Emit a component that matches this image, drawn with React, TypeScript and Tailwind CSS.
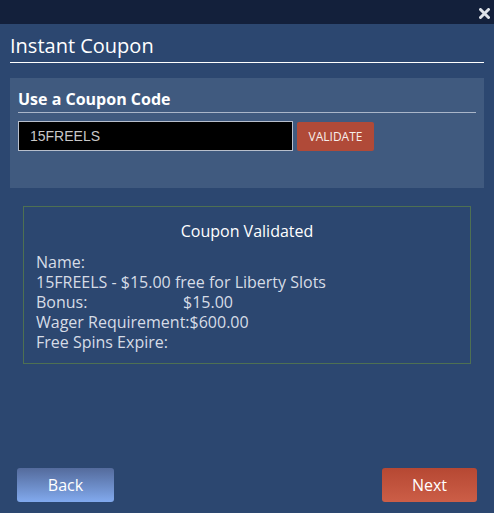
export default function App() {
  return (
    <div className="w-full h-[513px] bg-[#2c4770] flex flex-col font-['Open_Sans',sans-serif] text-white">
      {/* top bar */}
      <div className="h-[24px] bg-[#13203b] flex items-start justify-end pr-[4px] pt-[8px] shrink-0">
        <svg width="11" height="11" viewBox="0 0 11 11">
          <path d="M1.5 1.5 L9.5 9.5 M9.5 1.5 L1.5 9.5" stroke="#dde1e8" strokeWidth="3" strokeLinecap="round" />
        </svg>
      </div>

      <h1 className="mt-[8px] px-[10px] text-[20px] leading-[27px] font-normal">Instant Coupon</h1>
      <div className="mx-[10px] mt-[3px] h-px bg-white" />

      {/* coupon code section */}
      <div className="mx-[10px] mt-[15px] bg-[#405a7f] px-[8px] pt-[10px] pb-[37px]">
        <h2 className="text-[16px] leading-[22px] font-bold">Use a Coupon Code</h2>
        <div className="mt-[2px] h-px bg-[#aab6c9]" />
        <div className="mt-[8px] flex items-start gap-[4px]">
          <input
            defaultValue="15FREELS"
            className="w-[275px] h-[30px] bg-black border border-[#b8bfcc] px-[11px] text-[14px] text-[#c8c8c8] font-['Liberation_Sans',Arial,sans-serif] outline-none"
          />
          <button className="mt-[1px] w-[77px] h-[29px] bg-[#b04a38] rounded-[2px] text-[12px] text-[#f7efec]">
            VALIDATE
          </button>
        </div>
      </div>

      {/* result */}
      <div className="mx-[23px] mt-[18px] border border-[#4e7052] pt-[13px] pb-[11px] pl-[12px]">
        <div className="text-center text-[16px] leading-[23px] pr-[12px]">Coupon Validated</div>
        <div className="mt-[9px] text-[16px] leading-[20px] text-[#d6dce6]">
          <div>Name:</div>
          <div>15FREELS - $15.00 free for Liberty Slots</div>
          <div>
            <span className="inline-block w-[147px]">Bonus:</span>$15.00
          </div>
          <div>Wager Requirement:$600.00</div>
          <div>Free Spins Expire:</div>
        </div>
      </div>

      <div className="flex-1" />

      <div className="flex justify-between px-[17px] pb-[11px]">
        <button className="w-[97px] h-[34px] rounded-[3px] bg-gradient-to-b from-[#546b9c] to-[#82aaee] text-[16px] text-white">
          Back
        </button>
        <button className="w-[95px] h-[34px] rounded-[3px] bg-gradient-to-b from-[#b64833] to-[#cc5e47] text-[16px] text-white">
          Next
        </button>
      </div>
    </div>
  );
}
